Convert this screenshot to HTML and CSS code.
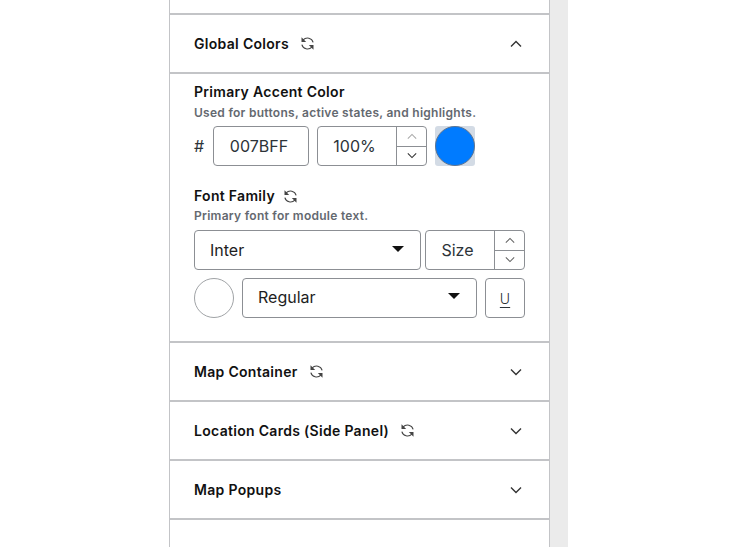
FILE: index.html
```html
<!DOCTYPE html>
<html lang="en">
<head>
  <meta charset="UTF-8">
  <meta name="viewport" content="width=device-width, initial-scale=1.0">
  <title>Module settings</title>
  <link rel="stylesheet" href="styles.css">
</head>
<body>
  <svg class="icon-defs" width="0" height="0" aria-hidden="true">
    <symbol id="sync" viewBox="0 0 16 16">
      <path class="sync-line" d="M14 6.8A6.2 6.2 0 0 0 3.4 4.2" />
      <path class="sync-head" d="M1.6 1.4V6.4H6.6Z" />
      <path class="sync-line" d="M2 9.2A6.2 6.2 0 0 0 12.6 11.8" />
      <path class="sync-head" d="M14.4 14.6V9.6H9.4Z" />
    </symbol>
    <symbol id="chev-down" viewBox="0 0 12 8">
      <path d="M1 1.5L6 6.5L11 1.5" />
    </symbol>
    <symbol id="chev-up" viewBox="0 0 12 8">
      <path d="M1 6.5L6 1.5L11 6.5" />
    </symbol>
  </svg>

  <div class="layout">
    <div class="panel">
      <div class="panel-top"></div>

      <div class="section">
        <div class="section-head">
          <span class="section-title">Global Colors</span>
          <svg class="sync"><use href="#sync"/></svg>
          <svg class="chev"><use href="#chev-up"/></svg>
        </div>
        <div class="section-body">
          <div class="field-title">Primary Accent Color</div>
          <div class="field-help accent-help">Used for buttons, active states, and highlights.</div>
          <div class="row color-row">
            <span class="hash">#</span>
            <div class="box hex-box">007BFF</div>
            <div class="box stepper pct-box">
              <span class="stepper-value">100%</span>
              <span class="stepper-btns">
                <span class="step muted"><svg class="step-icon"><use href="#chev-up"/></svg></span>
                <span class="step"><svg class="step-icon"><use href="#chev-down"/></svg></span>
              </span>
            </div>
            <div class="swatch"><span class="swatch-fill"></span></div>
          </div>

          <div class="field-title font-title">Font Family
            <svg class="sync"><use href="#sync"/></svg>
          </div>
          <div class="field-help font-help">Primary font for module text.</div>
          <div class="row font-row">
            <div class="box select font-select">Inter<span class="caret"></span></div>
            <div class="box stepper size-box">
              <span class="stepper-value">Size</span>
              <span class="stepper-btns">
                <span class="step light"><svg class="step-icon"><use href="#chev-up"/></svg></span>
                <span class="step light"><svg class="step-icon"><use href="#chev-down"/></svg></span>
              </span>
            </div>
          </div>
          <div class="row style-row">
            <span class="text-color"></span>
            <div class="box select weight-select">Regular<span class="caret"></span></div>
            <div class="box underline-btn">U</div>
          </div>
        </div>
      </div>

      <div class="section">
        <div class="section-head">
          <span class="section-title">Map Container</span>
          <svg class="sync"><use href="#sync"/></svg>
          <svg class="chev"><use href="#chev-down"/></svg>
        </div>
      </div>

      <div class="section">
        <div class="section-head">
          <span class="section-title">Location Cards (Side Panel)</span>
          <svg class="sync"><use href="#sync"/></svg>
          <svg class="chev"><use href="#chev-down"/></svg>
        </div>
      </div>

      <div class="section section-last">
        <div class="section-head">
          <span class="section-title">Map Popups</span>
          <svg class="chev"><use href="#chev-down"/></svg>
        </div>
      </div>
    </div>
    <div class="scroll-track"></div>
  </div>
</body>
</html>
```

FILE: styles.css
```css
* {
  box-sizing: border-box;
}

html, body {
  margin: 0;
  height: 547px;
  overflow: hidden;
  background: #fff;
}

body {
  font-family: "Inter", "Open Sans", sans-serif;
  color: #111;
}

.icon-defs {
  position: absolute;
}

.layout {
  display: flex;
  height: 547px;
  margin-left: 169px;
}

.panel {
  width: 381px;
  border-left: 1px solid #c3c4c7;
  border-right: 1px solid #c3c4c7;
}

.panel-top {
  height: 13px;
}

.scroll-track {
  width: 18px;
  background: #ebebeb;
}

.section {
  border-top: 2px solid #c3c4c7;
}

.section-last {
  border-bottom: 2px solid #c3c4c7;
}

.section-head {
  display: flex;
  align-items: center;
  height: 57px;
  padding: 0 27px 0 24px;
}

.section-title {
  font-size: 14px;
  font-weight: 600;
  letter-spacing: 0.3px;
}

.sync {
  width: 15px;
  height: 15px;
  margin-left: 11px;
  fill: none;
}

.sync-line {
  fill: none;
  stroke: #444;
  stroke-width: 1.2;
}

.sync-head {
  fill: #444;
  stroke: none;
}

.chev {
  width: 12px;
  height: 8px;
  margin-left: auto;
  fill: none;
  stroke: #333;
  stroke-width: 1.4;
}

.section-body {
  border-top: 2px solid #c3c4c7;
  height: 269px;
  padding: 8px 24px 0;
}

.field-title {
  display: flex;
  align-items: center;
  font-size: 14px;
  font-weight: 600;
  line-height: 20px;
  letter-spacing: 0.3px;
}

.field-title .sync {
  margin-left: 8px;
}

.font-title {
  margin-top: 20px;
}

.field-help {
  font-size: 12px;
  font-weight: 600;
  line-height: 16px;
  letter-spacing: 0.27px;
  color: #646970;
}

.accent-help {
  margin-top: 3px;
}

.font-help {
  margin-top: 2px;
}

.row {
  display: flex;
  align-items: stretch;
}

.color-row {
  margin-top: 5px;
  gap: 8px;
  height: 40px;
}

.font-row {
  margin-top: 6px;
  gap: 4px;
  height: 40px;
}

.style-row {
  margin-top: 8px;
  gap: 8px;
  height: 40px;
}

.hash {
  width: 11px;
  align-self: center;
  font-size: 16px;
  color: #2c3338;
}

.box {
  display: flex;
  align-items: center;
  border: 1px solid #8c8f94;
  border-radius: 4px;
  background: #fff;
  font-size: 16px;
  color: #2c3338;
}

.hex-box {
  width: 96px;
  justify-content: center;
  padding-right: 4px;
}

.stepper {
  overflow: hidden;
}

.stepper-value {
  flex: 1;
  text-align: center;
  padding-right: 5px;
}

.stepper-btns {
  display: flex;
  flex-direction: column;
  width: 30px;
  height: 100%;
  border-left: 1px solid #8c8f94;
}

.step {
  flex: 1;
  display: flex;
  align-items: center;
  justify-content: center;
}

.step + .step {
  border-top: 1px solid #8c8f94;
}

.step-icon {
  width: 10px;
  height: 7px;
  fill: none;
  stroke: #333;
  stroke-width: 1.3;
}

.step.muted .step-icon {
  stroke: #aaa;
}

.step.light .step-icon {
  stroke: #666;
}

.pct-box {
  width: 110px;
}

.size-box {
  width: 100px;
}

.swatch {
  width: 40px;
  height: 40px;
  background: #d3dbe5;
  border-radius: 3px;
}

.swatch-fill {
  display: block;
  width: 100%;
  height: 100%;
  border-radius: 50%;
  background: #007bff;
  border: 1px solid #5f7590;
}

.select {
  position: relative;
  padding-left: 15px;
  color: #1e1e1e;
}

.font-select {
  width: 227px;
}

.weight-select {
  width: 235px;
  padding-bottom: 3px;
}

.caret {
  position: absolute;
  right: 16px;
  top: 50%;
  margin-top: -4px;
  border-left: 6px solid transparent;
  border-right: 6px solid transparent;
  border-top: 6px solid #111;
}

.weight-select .caret {
  margin-top: -5px;
}

.text-color {
  width: 40px;
  height: 40px;
  border: 1px solid #a0a3a6;
  border-radius: 50%;
  background: #fff;
}

.underline-btn {
  width: 40px;
  justify-content: center;
  font-size: 14px;
  font-weight: 300;
  text-decoration: underline;
  text-underline-offset: 3px;
}
```
